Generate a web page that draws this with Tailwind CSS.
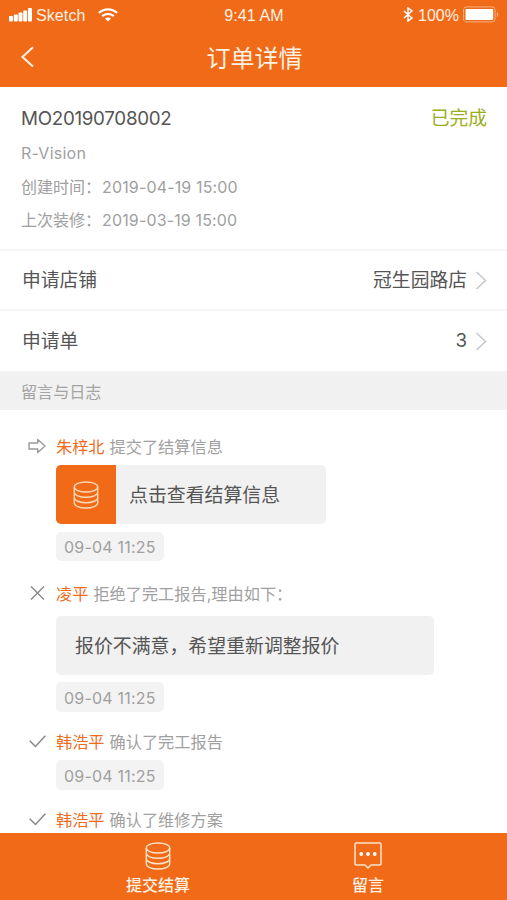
<!DOCTYPE html>
<html lang="zh-CN">
<head>
<meta charset="utf-8">
<title>订单详情</title>
<script src="https://cdn.jsdelivr.net/npm/@tailwindcss/browser@4"></script>
</head>
<body class="bg-white">
<div class="flex h-[900px] w-[507px] flex-col overflow-hidden bg-white font-[Inter,'Noto_Sans_CJK_SC',sans-serif] whitespace-nowrap text-[#a0a0a0]">
  <header class="h-[87px] shrink-0 bg-[#f06a17] text-[#fff1e4]">
    <div class="grid h-[30px] grid-cols-3 items-center pt-px pr-[8px] pl-[9px] font-['Liberation_Sans',sans-serif] text-[16px]">
      <div class="flex items-center">
        <svg class="mr-[4px] mb-px h-[14px] w-[23px]" viewBox="0 0 23 14" fill="#fff"><rect x="0" y="8" width="4" height="5.5" rx="1"/><rect x="4.8" y="6.5" width="4" height="7" rx="1"/><rect x="9.5" y="4.5" width="4" height="9" rx="1"/><rect x="14.2" y="2.5" width="4" height="11" rx="1"/><rect x="19" y="0" width="4" height="13.5" rx="1"/></svg>
        <span class="tracking-[0.1px]">Sketch</span>
        <svg class="mb-[2px] ml-[12px] h-[14px] w-[20px]" viewBox="0 0 20 14" fill="none" stroke="#fff" stroke-width="2.3"><path d="M.9 4.8C6.2.1 13.8.1 19.1 4.8M4.2 8.2c3.4-3 8.2-3 11.6 0"/><path d="M10 13.5 6.9 10.5c1.8-1.5 4.4-1.5 6.2 0Z" fill="#fff" stroke="none"/></svg>
      </div>
      <div class="text-center tracking-[0.1px]">9:41 AM</div>
      <div class="flex items-center justify-end">
        <svg class="mr-[5px] mb-[2px] h-[15px] w-[10px]" viewBox="0 0 10 15" fill="none" stroke="#fff" stroke-width="1.5"><path d="m1 4 8 7-4 3V1l4 3-8 7"/></svg>
        <span class="mr-[4px]">100%</span>
        <svg class="mb-[2px] h-[17px] w-[36px]" viewBox="0 0 36 17"><rect x=".6" y=".9" width="31.5" height="15" rx="3" fill="none" stroke="#f8b083"/><rect x="2.5" y="3" width="27.7" height="11" rx="1" fill="#fff"/><path d="M33.8 6v5c2-1.2 2-3.8 0-5Z" fill="#f8b083"/></svg>
      </div>
    </div>
    <div class="grid h-[57px] grid-cols-[60px_1fr_60px] items-center">
      <svg class="mb-[3px] ml-[20px] h-[22px] w-[15px]" viewBox="0 0 15 22" fill="none" stroke="#fff4e8" stroke-width="2"><path d="M13 1.2 2.4 11 13 20.6"/></svg>
      <h1 class="pt-px pl-[2px] text-center text-[24px] leading-[56px]">订单详情</h1>
    </div>
  </header>

  <section class="h-[164px] shrink-0 border-b-2 border-[#f4f4f4] pr-[20px] pl-[21px] pt-[13px] text-[16px] leading-[33.5px]">
    <div class="flex h-[37px] items-center justify-between text-[18.8px]">
      <span class="tracking-[-0.3px] text-[#555]">MO20190708002</span>
      <span class="pt-px text-[#9aaf20]">已完成</span>
    </div>
    <div class="tracking-[0.25px]">R-Vision</div>
    <div>创建时间：<span class="ml-px tracking-[0.15px]">2019-04-19 15:00</span></div>
    <div>上次装修：<span class="ml-px tracking-[0.15px]">2019-03-19 15:00</span></div>
  </section>
  <section class="shrink-0 text-[18.8px] text-[#555]">
    <div class="flex h-[60px] items-center justify-between border-b-2 border-[#f6f6f6] pt-px pr-[20px] pl-[22px]">
      <span class="pt-[2px]">申请店铺</span>
      <span class="flex items-center gap-[8px]"><span class="pt-[2px]">冠生园路店</span><svg class="h-[19px] w-[12px]" viewBox="0 0 12 19" fill="none" stroke="#c8c8c8" stroke-width="1.6"><path d="m1.5 1 9 8.5-9 8.5"/></svg></span>
    </div>
    <div class="flex h-[60px] items-center justify-between pr-[20px] pl-[22px]">
      <span class="pt-[2px]">申请单</span>
      <span class="flex items-center gap-[8px]">3<svg class="h-[19px] w-[12px]" viewBox="0 0 12 19" fill="none" stroke="#c8c8c8" stroke-width="1.6"><path d="m1.5 1 9 8.5-9 8.5"/></svg></span>
    </div>
  </section>
  <h2 class="h-[39px] shrink-0 bg-[#f1f1f1] pl-[21px] text-[16.1px] leading-[42px] text-[#a4a4a4]">留言与日志</h2>

  <main class="min-h-0 flex-1 overflow-hidden pt-[25px] text-[16.2px]">
    <article class="grid h-[147px] grid-cols-[56px_1fr] content-start">
      <svg class="mt-[3px] ml-[28px] h-[16px] w-[18px]" viewBox="0 0 18 16" fill="none" stroke="#999" stroke-width="1.4" stroke-linejoin="round"><path d="M1 5h8.7V1.5L17 8l-7.3 6.5V11H1Z"/></svg>
      <div>
        <p class="h-[30px] leading-[25px]"><span class="mr-[5px] text-[#ef6c1f]">朱梓北</span>提交了结算信息</p>
        <div class="flex h-[59px] w-[270px] overflow-hidden rounded-[5px] bg-[#f1f1f1]">
          <div class="flex w-[60px] items-center justify-center bg-[#f06a17]">
            <svg class="h-[28px] w-[26px]" viewBox="0 0 26 28" fill="none" stroke="#ffd9b8" stroke-width="1.4"><ellipse cx="13" cy="6" rx="11.7" ry="5"/><path d="M1.3 6v16c0 2.8 5.2 5 11.7 5s11.7-2.2 11.7-5V6M1.3 11.3c0 2.8 5.2 5 11.7 5s11.7-2.2 11.7-5M1.3 16.7c0 2.8 5.2 5 11.7 5s11.7-2.2 11.7-5"/></svg>
          </div>
          <span class="pl-[13px] text-[18.9px] leading-[62px] text-[#555]">点击查看结算信息</span>
        </div>
        <time class="mt-[8px] block h-[29px] w-[108px] rounded-[5px] bg-[#f3f3f3] pl-[8px] text-[16px] leading-[30px] tracking-[0.2px]">09-04 11:25</time>
      </div>
    </article>
    <article class="grid h-[148px] grid-cols-[56px_1fr] content-start">
      <svg class="mt-[3px] ml-[30px] h-[16px] w-[15px]" viewBox="0 0 15 16" fill="none" stroke="#888" stroke-width="1.4"><path d="m1 1.5 13 13M14 1.5l-13 13"/></svg>
      <div>
        <p class="h-[34px] leading-[25px]"><span class="mr-[5px] text-[#ef6c1f]">凌平</span>拒绝了完工报告,理由如下：</p>
        <div class="h-[59px] w-[378px] rounded-[5px] bg-[#f1f1f1] pl-[19px] text-[18.9px] leading-[62px] text-[#555]">报价不满意，希望重新调整报价</div>
        <time class="mt-[7px] block h-[30px] w-[108px] rounded-[5px] bg-[#f3f3f3] pl-[8px] text-[16px] leading-[32px] tracking-[0.2px]">09-04 11:25</time>
      </div>
    </article>
    <article class="grid h-[78px] grid-cols-[56px_1fr] content-start">
      <svg class="mt-[5px] ml-[29px] h-[13px] w-[17px]" viewBox="0 0 17 13" fill="none" stroke="#888" stroke-width="1.5"><path d="m.7 5.7 5.8 5.8L16.3.8"/></svg>
      <div>
        <p class="h-[30px] leading-[25px]"><span class="mr-[5px] text-[#ef6c1f]">韩浩平</span>确认了完工报告</p>
        <time class="block h-[30px] w-[108px] rounded-[5px] bg-[#f3f3f3] pl-[8px] text-[16px] leading-[32px] tracking-[0.2px]">09-04 11:25</time>
      </div>
    </article>
    <article class="grid grid-cols-[56px_1fr] content-start">
      <svg class="mt-[5px] ml-[29px] h-[13px] w-[17px]" viewBox="0 0 17 13" fill="none" stroke="#888" stroke-width="1.5"><path d="m.7 5.7 5.8 5.8L16.3.8"/></svg>
      <p class="leading-[25px]"><span class="mr-[5px] text-[#ef6c1f]">韩浩平</span>确认了维修方案</p>
    </article>
  </main>

  <footer class="grid h-[67px] shrink-0 grid-cols-[210px_210px] justify-start bg-[#f06a17] pl-[53px] text-[16px] leading-[24px] font-medium text-[#fff0e2]">
    <div class="flex flex-col items-center pt-[9px]">
      <svg class="h-[28px] w-[26px]" viewBox="0 0 26 28" fill="none" stroke="#ffe3ca" stroke-width="1.4"><ellipse cx="13" cy="6" rx="11.7" ry="5"/><path d="M1.3 6v16c0 2.8 5.2 5 11.7 5s11.7-2.2 11.7-5V6M1.3 11.3c0 2.8 5.2 5 11.7 5s11.7-2.2 11.7-5M1.3 16.7c0 2.8 5.2 5 11.7 5s11.7-2.2 11.7-5"/></svg>
      <span class="mt-[3px]">提交结算</span>
    </div>
    <div class="flex flex-col items-center pt-[9px]">
      <svg class="h-[28px] w-[28px]" viewBox="0 0 28 28" fill="none" stroke="#ffe3ca" stroke-width="1.5" stroke-linejoin="round"><path d="M2 1h24q1 0 1 1v20q0 1-1 1h-9l-3 3-3-3H2q-1 0-1-1V2q0-1 1-1Z"/><g fill="#fff" stroke="none"><circle cx="7.3" cy="12" r="1.9"/><circle cx="14" cy="12" r="1.9"/><circle cx="20.7" cy="12" r="1.9"/></g></svg>
      <span class="mt-[3px]">留言</span>
    </div>
  </footer>
</div>
</body>
</html>
